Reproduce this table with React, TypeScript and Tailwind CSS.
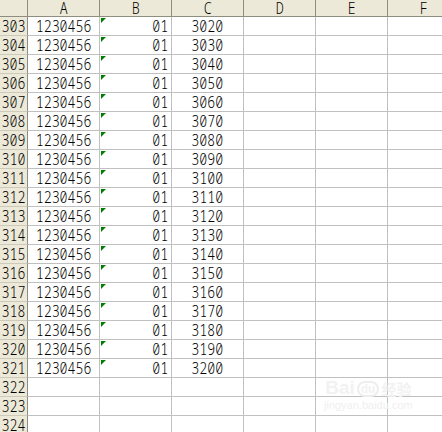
import React from "react";

const cols = ["A", "B", "C", "D", "E", "F"];
const rows = Array.from({ length: 22 }, (_, i) => 303 + i);

function T({ children, right }: { children: React.ReactNode; right?: boolean }) {
  return (
    <span className={`inline-block scale-x-[0.83] font-[350] text-[16px] leading-[14px] ${right ? "origin-right" : "origin-center"}`}>
      {children}
    </span>
  );
}

export default function App() {
  return (
    <div
      className="relative w-[442px] h-[432px] overflow-hidden bg-white text-black"
      style={{ fontFamily: '"Noto Sans Mono", "DejaVu Sans Mono", monospace' }}
    >
      <div className="flex w-[460px]">
        <div className="w-[28px] h-[17px] shrink-0 bg-[#ece9d8] border-r border-b border-[#8f8d80]" />
        {cols.map((c) => (
          <div
            key={c}
            className="w-[72px] h-[17px] shrink-0 bg-[#ece9d8] border-r border-b border-[#8f8d80] flex items-center justify-center"
          >
            <T>{c}</T>
          </div>
        ))}
      </div>
      {rows.map((r, i) => {
        const filled = r <= 321;
        return (
          <div key={r} className="flex w-[460px]">
            <div className="w-[28px] h-[19px] shrink-0 bg-[#ece9d8] border-r border-r-[#8f8d80] border-b border-b-[#cdcabb] flex items-center justify-center">
              <T>{r}</T>
            </div>
            <div className="w-[72px] h-[19px] shrink-0 border-r border-b border-[#c0c0c0] flex items-center justify-center">
              {filled && <T>1230456</T>}
            </div>
            <div className="relative w-[72px] h-[19px] shrink-0 border-r border-b border-[#c0c0c0] flex items-center justify-end pr-[3px]">
              {filled && (
                <span className="absolute left-[1px] top-[1px] w-0 h-0 border-t-[5px] border-t-[#008000] border-r-[5px] border-r-transparent" />
              )}
              {filled && <T right>01</T>}
            </div>
            <div className="w-[72px] h-[19px] shrink-0 border-r border-b border-[#c0c0c0] flex items-center justify-center">
              {filled && <T>{String(3020 + i * 10)}</T>}
            </div>
            <div className="w-[72px] h-[19px] shrink-0 border-r border-b border-[#c0c0c0]" />
            <div className="w-[72px] h-[19px] shrink-0 border-r border-b border-[#c0c0c0]" />
            <div className="w-[72px] h-[19px] shrink-0 border-r border-b border-[#c0c0c0]" />
          </div>
        );
      })}
      <div
        className="absolute left-[324px] top-[378px] flex flex-col items-center pointer-events-none"
        style={{ fontFamily: '"Liberation Sans", "Noto Sans CJK SC", sans-serif' }}
      >
        <div className="flex items-end gap-[2px] text-[19px] leading-none font-bold text-[#f2f2f2]">
          <span>Bai</span>
          <span className="rounded-full border-2 border-[#eeeeee] px-[2px] text-[12px]">du</span>
          <span className="text-[15px]">经验</span>
        </div>
        <div className="text-[11px] leading-none mt-[3px] text-[#efefef]">jingyan.baidu.com</div>
      </div>
    </div>
  );
}
